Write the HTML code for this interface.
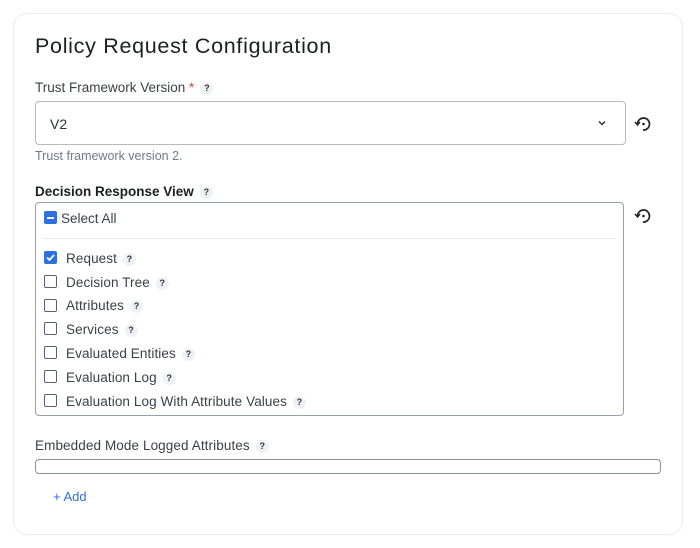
<!DOCTYPE html>
<html><head><style>
*{box-sizing:border-box;margin:0;padding:0}
body{width:700px;height:548px;background:#fff;font-family:"Liberation Sans",sans-serif;color:#2b2f36;position:relative;overflow:hidden}
.card{position:absolute;left:13px;top:13px;width:670px;height:522px;border:1px solid #e8ebf0;border-radius:14px}
.a{position:absolute;white-space:nowrap}
.q{display:inline-block;width:13px;height:13px;border-radius:50%;background:#eef1f5;font-size:9px;font-weight:bold;text-align:center;line-height:13px;color:#333;vertical-align:1px;margin-left:6px}
.cb{position:absolute;left:44px;width:13px;height:13px;border:1.5px solid #5a6070;border-radius:2px;background:#fff}
.lbl{position:absolute;left:66px;font-size:13.5px;color:#3a3f48;letter-spacing:0.1px}
</style></head><body>
<div class="card"></div>
<div class="a" style="left:35px;top:34px;font-size:21.5px;color:#1c1f24;letter-spacing:0.7px">Policy Request Configuration</div>
<div class="a" style="left:35px;top:80px;font-size:13.5px;color:#3a3f48">Trust Framework Version <span style="color:#e5484d">*</span><span class="q">?</span></div>
<div class="a" style="left:35px;top:101px;width:591px;height:44px;border:1px solid #b5bac4;border-radius:4px"></div>
<div class="a" style="left:50px;top:116px;font-size:14px;color:#2b2f36">V2</div>
<svg class="a" style="left:597px;top:119px" width="10" height="8" viewBox="0 0 10 8"><path d="M2 2.5 L5 5.5 L8 2.5" stroke="#333" stroke-width="1.5" fill="none"/></svg>
<svg class="a" style="left:633px;top:114px" width="20" height="20" viewBox="0 0 20 20"><path d="M4.5 10 A6 6 0 1 1 10 16" stroke="#222" stroke-width="1.7" fill="none"/><path d="M2 8 L4.5 11 L7 8" stroke="#222" stroke-width="1.5" fill="none"/><circle cx="10.5" cy="10" r="1.3" fill="#222"/></svg>
<div class="a" style="left:35px;top:149px;font-size:12.5px;color:#6f7a8c">Trust framework version 2.</div>
<div class="a" style="left:35px;top:184px;font-size:13.5px;font-weight:bold;color:#1c1f24">Decision Response View<span class="q">?</span></div>
<div class="a" style="left:35px;top:202px;width:589px;height:214px;border:1px solid #9aa0aa;border-radius:4px"></div>
<svg class="a" style="left:633px;top:206px" width="20" height="20" viewBox="0 0 20 20"><path d="M4.5 10 A6 6 0 1 1 10 16" stroke="#222" stroke-width="1.7" fill="none"/><path d="M2 8 L4.5 11 L7 8" stroke="#222" stroke-width="1.5" fill="none"/><circle cx="10.5" cy="10" r="1.3" fill="#222"/></svg>
<div class="a" style="left:44px;top:211px;width:13px;height:13px;background:#2f6fe0;border-radius:2px"><div style="position:absolute;left:3px;top:5.5px;width:7px;height:2px;background:#fff"></div></div>
<div class="a" style="left:61px;top:211px;font-size:13.5px;color:#3a3f48">Select All</div>
<div class="a" style="left:42px;top:238px;width:574px;height:1px;background:#e6e9ee"></div>
<div class="a" style="left:44px;top:251px;width:13px;height:13px;background:#2f6fe0;border-radius:2px"><svg width="13" height="13" viewBox="0 0 13 13" style="position:absolute;left:0;top:0"><path d="M3 6.5 L5.5 9 L10 4" stroke="#fff" stroke-width="1.8" fill="none"/></svg></div>
<div class="lbl" style="top:251px">Request<span class="q">?</span></div>
<div class="cb" style="top:275px"></div><div class="lbl" style="top:275px">Decision Tree<span class="q">?</span></div>
<div class="cb" style="top:299px"></div><div class="lbl" style="top:298px">Attributes<span class="q">?</span></div>
<div class="cb" style="top:322px"></div><div class="lbl" style="top:322px">Services<span class="q">?</span></div>
<div class="cb" style="top:346px"></div><div class="lbl" style="top:346px">Evaluated Entities<span class="q">?</span></div>
<div class="cb" style="top:370px"></div><div class="lbl" style="top:370px">Evaluation Log<span class="q">?</span></div>
<div class="cb" style="top:394px"></div><div class="lbl" style="top:394px">Evaluation Log With Attribute Values<span class="q">?</span></div>
<div class="a" style="left:35px;top:438px;font-size:13.5px;color:#3a3f48;letter-spacing:0.1px">Embedded Mode Logged Attributes<span class="q">?</span></div>
<div class="a" style="left:35px;top:459px;width:626px;height:15px;border:1px solid #8a909a;border-radius:4px"></div>
<div class="a" style="left:53px;top:489px;font-size:13px;color:#2f6fe0">+ Add</div>
</body></html>
